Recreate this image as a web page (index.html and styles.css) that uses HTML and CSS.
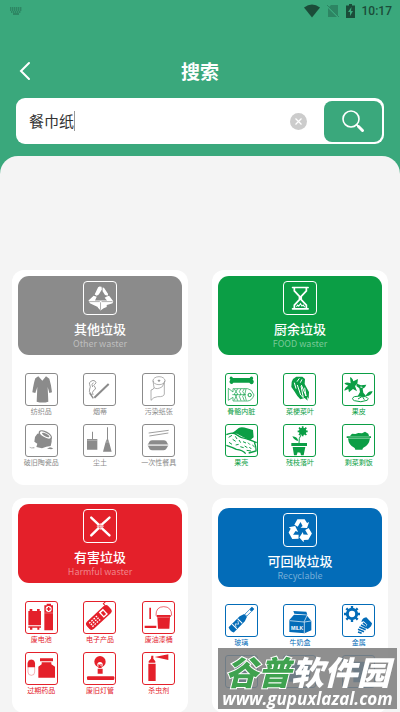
FILE: index.html
```html
<!DOCTYPE html>
<html lang="zh-CN">
	<head>
		<meta charset="UTF-8" />
		<meta name="viewport" content="width=device-width, initial-scale=1.0" />
		<title>搜索</title>
		<link rel="stylesheet" href="styles.css">
	</head>
	<body>
		<header class="header">
			<div class="status-bar">
				<svg class="keyboard" viewBox="0 0 12 8"><path d="M0 1h12M0 3h12M1 5h10" stroke-dasharray="1.4 .6"/><path d="M3 7h6"/></svg>
				<div class="status-right">
					<svg width="16" height="14" viewBox="0 0 16 14"><path d="M0 3.500Q8-2.500 16 3.500L8 13.500Z" fill="#1b4c39"/></svg>
					<svg width="12" height="14" viewBox="0 0 12 14"><path d="M4 1h7v11L2 3zM1 4l9 9H1z" fill="#2d8563"/><path d="M0 1l12 12" stroke="#2d8563"/></svg>
					<svg width="9" height="14" viewBox="0 0 9 14"><path d="M3 0h3v1.500h3V14H0V1.500h3z" fill="#1b4c39"/><path d="M5.500 3L2 8h2v4l3-5H5z" fill="#3aa87c"/></svg>
					<span class="time">10:17</span>
				</div>
			</div>
			<div class="nav">
				<button class="back" type="button" aria-label="返回">
					<svg width="12" height="20" viewBox="0 0 12 20"><path d="M10 2L2 10l8 8" fill="none" stroke="#fff" stroke-width="2" stroke-linecap="round"/></svg>
				</button>
				<h1 class="title">搜索</h1>
			</div>
			<form class="search">
				<input class="search-input" type="text" value="餐巾纸" aria-label="搜索垃圾">
				<span class="caret"></span>
				<button class="clear" type="button" aria-label="清除">
					<svg width="17" height="17" viewBox="0 0 17 17"><circle cx="8.500" cy="8.500" r="8.500" fill="#ccc"/><path d="M5.500 5.500l6 6m0-6l-6 6" stroke="#fff" stroke-width="1.300"/></svg>
				</button>
				<button class="search-button" type="button" aria-label="搜索">
					<svg width="24" height="24" viewBox="0 0 24 24" fill="none" stroke="#fff" stroke-linecap="round"><circle cx="10" cy="10" r="8" stroke-width="1.600"/><path d="M15.500 15.500l1.500 1.500" stroke-width="1.600"/><path d="M17.500 17.500l4 4" stroke-width="3"/></svg>
				</button>
			</form>
		</header>

		<main class="panel">
			<div class="cards">
				<section class="card other">
					<div class="banner">
						<svg class="badge" viewBox="3 3 93 93" fill="currentColor">
							<path d="M34 39L44 18 48 16 54 17 55 25 46 39 40 43zM57 19L61 20 73 38 72 43 64 41 57 30z"/>
							<path d="M31 43L40 46 35 57 49 57 49 62 43 76 20 65 16 57zM69 45L76 43 88 59 86 65 77 68 69 70 69 76 60 79 51 86 43 77 43 67 49 62V57H70L63 49z"/>
							<path d="M18 60H49M54 60H86M51 62V84" stroke="#8b8b8b" stroke-width="2"/>
						</svg>
						<h2 class="card-title">其他垃圾</h2>
						<p class="card-subtitle">Other waster</p>
					</div>
					<ul class="items">
						<li class="item">
							<svg class="icon" viewBox="3 3 93 93" fill="currentColor"><path d="M40 10L52 23 63 10 73 17Q79 36 81 58L73 60Q70 48 68 42L70 86Q53 91 35 86L37 42Q34 51 31 60L22 58Q26 30 31 16z"/></svg>
							<span class="caption">纺织品</span>
						</li>
						<li class="item">
							<svg class="icon" viewBox="3 3 93 93" fill="none" stroke="currentColor"><path d="M34 74L77 33" stroke-width="6"/><path d="M20 60L31 76" stroke-width="4"/><path d="M27 66Q15 56 20 48 24 42 20 35 16 29 24 25 30 20 36 24 43 30 35 34 29 37 36 42 41 49 32 52 26 57 30 66M31 29Q24 34 29 42" stroke-width="2.500"/></svg>
							<span class="caption">烟蒂</span>
						</li>
						<li class="item">
							<svg class="icon" viewBox="3 3 93 93" fill="none" stroke="currentColor" stroke-width="2"><ellipse cx="51" cy="23" rx="18" ry="12"/><ellipse cx="51" cy="23" rx="3" ry="2" fill="currentColor"/><path d="M33 23L36 44Q45 51 61 41L69 23M36 44Q35 50 27 51V82Q34 72 47 71 66 72 67 63V29"/></svg>
							<span class="caption">污染纸张</span>
						</li>
						<li class="item">
							<svg class="icon" viewBox="3 3 93 93" fill="currentColor"><path d="M30 39L28 53 37 59 34 69 51 73 64 68 77 66 80 53 80 40 68 33 47 27 37 29z"/><ellipse cx="61" cy="33" rx="20" ry="9" transform="rotate(28 61 33)" fill="#fff" stroke="currentColor" stroke-width="4"/><ellipse cx="62" cy="33" rx="12" ry="4" transform="rotate(28 62 33)"/><path d="M12 68l8 3 8-1v3H18zM66 74l9-4 10 3-6 3z"/></svg>
							<span class="caption">破旧陶瓷品</span>
						</li>
						<li class="item">
							<svg class="icon" viewBox="3 3 93 93" fill="currentColor"><path d="M27 23h3v22h13v32H12V45h15zM72 10h3v35l3 8 8 30H60l8-30 4-8z"/><path d="M13 49h29M67 54h13" stroke="#fff"/></svg>
							<span class="caption">尘土</span>
						</li>
						<li class="item">
							<svg class="icon" viewBox="3 3 93 93" fill="currentColor"><path d="M20 27l60-8M22 36l57-9" stroke="currentColor" stroke-width="2.500"/><path d="M18 61l5-9q3-3 8-3h34q5 0 8 3l5 9zM18 66h60l-6 10q-3 3-8 3H31q-5 0-8-3z"/><path d="M17 63h62" stroke="currentColor" stroke-width="2"/></svg>
							<span class="caption">一次性餐具</span>
						</li>
					</ul>
				</section>

				<section class="card food">
					<div class="banner">
						<svg class="badge" viewBox="3 3 93 93" fill="none" stroke="currentColor" stroke-width="5"><path d="M28 19H73M28 81H73" stroke-linecap="round"/><path d="M33 20V29L48 45V54L33 70V80M68 20V29L53 45V54L68 70V80"/><path d="M39 75L43 70 46 73 51 66 55 73 59 70 63 76" stroke-width="3"/></svg>
						<h2 class="card-title">厨余垃圾</h2>
						<p class="card-subtitle">FOOD waster</p>
					</div>
					<ul class="items">
						<li class="item">
							<svg class="icon" viewBox="3 3 93 93" fill="currentColor"><path d="M24 15H74Q76 9 82 11 87 14 83 20 89 23 84 32 77 36 73 29H25Q21 36 15 31 11 26 16 20 11 15 16 11 21 9 24 15z"/><g fill="none" stroke="currentColor"><path d="M10 46L24 57V47H68Q80 48 87 66 81 83 68 84H24V73L10 82z" stroke-width="2"/><path d="M28 48l5 8-5 7 5 7-5 12M38 47l-5 9 5 7-5 7 5 13M48 47l-5 9 5 7-5 7 5 13M58 47l-5 9 5 7-5 7 5 13M22 65H63M63 47Q55 66 64 83" stroke-width="2"/><circle cx="74" cy="66" r="5" stroke-width="3"/></g></svg>
							<span class="caption">骨骼内脏</span>
						</li>
						<li class="item">
							<svg class="icon" viewBox="3 3 93 93" fill="currentColor"><path d="M30 18L40 11 58 11 66 18 65 33 78 57 77 77 72 71 74 83 65 75 52 79 43 69 34 55 25 42 26 27z"/><path d="M43 36l10 30 8 8-7-35M55 36l14 33-4-25M34 29l5 18M49 16l-7 10M57 19l-5 10" fill="none" stroke="#fff" stroke-width="3"/></svg>
							<span class="caption">菜梗菜叶</span>
						</li>
						<li class="item">
							<svg class="icon" viewBox="3 3 93 93" fill="currentColor"><path d="M24 13Q31 14 34 25L48 18 46 32 39 39 45 55 33 48 21 58 19 48 7 53Q8 44 19 38L7 32Q13 26 26 31z"/><path d="M45 32l12 5 16-2-4 8-7 4 2 12 9 11H47l7-13-2-11-9-7zM72 66q8-14 20-11-5 15-20 14z"/><path d="M37 71q-11 6 0 12 20 7 38-1 9-6-5-11-16-4-33 0M48 78l13-8 6 10" fill="none" stroke="currentColor" stroke-width="3"/><path d="M55 42l6 1" stroke="#fff" stroke-width="3"/></svg>
							<span class="caption">果皮</span>
						</li>
						<li class="item">
							<svg class="icon" viewBox="3 3 93 93" fill="currentColor"><path d="M17 30Q30 22 41 12 50 7 66 13L84 18 86 40 75 49 54 39 36 29z"/><path d="M4 32Q23 22 36 33 46 42 63 44 82 50 95 56M4 64Q23 70 34 76 53 78 62 89M88 55Q94 70 93 81L71 87" fill="none" stroke="currentColor" stroke-width="4"/><path d="M11 40l10-6M12 55l9 6M23 46l9 6M31 37l5 8M32 63l9-2M42 48l5 8M46 68l10 3M54 53l9 4M59 66l8 5M69 56l6 6M73 69l6 6M82 63l7 6M65 79l13 2" stroke="currentColor" stroke-width="3"/></svg>
							<span class="caption">果壳</span>
						</li>
						<li class="item">
							<svg class="icon" viewBox="3 3 93 93" fill="currentColor"><circle cx="59" cy="22" r="11"/><path d="M59 7v30M44 22h30M48 11l22 22M70 11L48 33" stroke="currentColor" stroke-width="5"/><path d="M54 33Q47 41 48 58" fill="none" stroke="currentColor" stroke-width="3"/><path d="M28 37Q43 38 46 51 34 50 28 37M25 57h47v9H25zM29 69h38l-5 25h-8l-2-8-8-1-3 9h-8z"/></svg>
							<span class="caption">残枝落叶</span>
						</li>
						<li class="item">
							<svg class="icon" viewBox="3 3 93 93" fill="currentColor"><path d="M24 36l6-7 10 1 9-3 11 1 9-5 10 6 2 7zM14 37h73v5H14zM18 43h66q-3 22-21 29l-2 5H40l-2-5Q20 65 18 43z"/><path d="M19 42H83" stroke="#fff"/></svg>
							<span class="caption">剩菜剩饭</span>
						</li>
					</ul>
				</section>

				<section class="card harmful">
					<div class="banner">
						<svg class="badge" viewBox="3 3 93 93" stroke="currentColor" stroke-width="7" stroke-linecap="round"><path d="M24 25L44 44M77 25L56 44M24 77L44 57M77 77L56 57"/><path d="M45 45H55V56H45zM50 42V60M41 50H60" fill="none" stroke-width="2"/></svg>
						<h2 class="card-title">有害垃圾</h2>
						<p class="card-subtitle">Harmful waster</p>
					</div>
					<ul class="items">
						<li class="item">
							<svg class="icon" viewBox="3 3 93 93" fill="currentColor"><path d="M10 30h38v43H10zM14 24h8v6h-8zM36 24h8v6h-8zM10 76h38v4h-5v6h-6v-6H22v6h-7v-6h-5zM58 13h7V8h13v5h6v75H58z"/><circle cx="71" cy="24" r="9" fill="#fff"/><path d="M65 24h12M71 18v12" stroke="currentColor" stroke-width="4"/><path d="M58 36h26" stroke="#fff"/></svg>
							<span class="caption">废电池</span>
						</li>
						<li class="item">
							<svg class="icon" viewBox="3 3 93 93"><g transform="rotate(-43 49 48)"><rect x="3" y="33" width="88" height="30" rx="10" fill="currentColor"/><path d="M85 34v-7h12" fill="none" stroke="currentColor" stroke-width="3"/><path d="M57 37h17v22H57z" fill="#fff"/><path d="M61 42h9v13h-9z" fill="currentColor"/><path d="M14 41h36M14 48h36M14 55h36" stroke="#fff" stroke-width="4" stroke-dasharray="5 4"/></g></svg>
							<span class="caption">电子产品</span>
						</li>
						<li class="item">
							<svg class="icon" viewBox="3 3 93 93" fill="currentColor"><path d="M22 20h5v34h-5zM8 74h35v7H8zM44 42h42v6h-2l-2 35H48l-2-35h-2z"/><path d="M42 44Q41 17 65 17 89 17 89 44" fill="none" stroke="currentColor" stroke-width="2"/><path d="M47 49h36" stroke="#fff"/></svg>
							<span class="caption">废油漆桶</span>
						</li>
						<li class="item">
							<svg class="icon" viewBox="3 3 93 93" fill="currentColor"><rect x="9" y="23" width="20" height="47" rx="10" fill="#fff" stroke="currentColor"/><path d="M8 46V33Q10 23 19 23 28 23 30 33V46zM45 19h39v9H45zM50 31h29v6l11 7v33H40V44l10-7z"/></svg>
							<span class="caption">过期药品</span>
						</li>
						<li class="item">
							<svg class="icon" viewBox="3 3 93 93" fill="currentColor"><circle cx="51" cy="29" r="17"/><circle cx="51" cy="38" r="8" fill="#fff"/><path d="M46 37h10v11H46zM44 50h15v15H44z"/><path d="M47 34l8 8" stroke="#fff" stroke-width="2"/><rect x="12" y="73" width="82" height="11" rx="3"/></svg>
							<span class="caption">废旧灯管</span>
						</li>
						<li class="item">
							<svg class="icon" viewBox="3 3 93 93" fill="currentColor"><path d="M28 11h6v9l6 8v4H20v-4l7-8zM19 35h22v52H19zM38 15l41-8v17z"/></svg>
							<span class="caption">杀虫剂</span>
						</li>
					</ul>
				</section>

				<section class="card recyclable">
					<div class="banner">
						<svg class="badge" viewBox="3 3 93 93" fill="currentColor">
							<path id="arrow" d="M33 34L42 18H63L70 29 76 26 70 44 51 43 57 38 51 26 43 40z"/>
							<use href="#arrow" transform="rotate(120 51 51)"/>
							<use href="#arrow" transform="rotate(240 51 51)"/>
						</svg>
						<h2 class="card-title">可回收垃圾</h2>
						<p class="card-subtitle">Recyclable</p>
					</div>
					<ul class="items">
						<li class="item">
							<svg class="icon" viewBox="3 3 93 93" fill="currentColor"><g transform="rotate(45 49 47)"><path d="M44-3h10v10H44zM43 29h12l5 14v47q-11 6-22 0V43z"/><path d="M45 8h8v20h-8z" fill="#fff" stroke="currentColor" stroke-width="2"/><path d="M39 53h20M39 76h20" stroke="#fff" stroke-width="3"/><path d="M44 57l9 5-8 7 9 5" fill="none" stroke="#fff" stroke-width="2"/></g></svg>
							<span class="caption">玻璃</span>
						</li>
						<li class="item">
							<svg class="icon" viewBox="3 3 93 93" fill="currentColor"><path d="M31 21l39 2 3 9-39-3zM33 32l38 2 14 17v28l-20 9-46-4V48z"/><path d="M20 50l43 4 9-19M64 54v33M64 54l20-3" fill="none" stroke="#fff" stroke-width="2"/><text class="carton-label" x="24" y="78">MILK</text></svg>
							<span class="caption">牛奶盒</span>
						</li>
						<li class="item">
							<svg class="icon" viewBox="3 3 93 93" fill="currentColor"><circle cx="30" cy="30" r="14" fill="none" stroke="currentColor" stroke-width="9"/><path d="M30 6v11M30 43v11M6 30h11M43 30h11M13 13l8 8M39 39l8 8M47 13l-8 8M13 47l8-8" stroke="currentColor" stroke-width="7"/><path d="M58 54Q61 41 73 40L90 58Q89 69 77 75L70 71 76 62 65 52z"/><path d="M63 57l10 8M57 63l16 8M52 69l19 8M48 76l18 7M48 84l11 4" stroke="currentColor" stroke-width="5"/></svg>
							<span class="caption">金属</span>
						</li>
						<li class="item">
							<svg class="icon" viewBox="3 3 93 93" fill="currentColor"><path d="M42 10h15v12l12 16v47H30V38l12-16z"/></svg>
						</li>
						<li class="item">
							<svg class="icon" viewBox="3 3 93 93" fill="currentColor"><path d="M18 36l18-13h46v43L64 80H18z"/></svg>
						</li>
						<li class="item">
							<svg class="icon" viewBox="3 3 93 93" fill="currentColor"><path d="M17 31l20-11h28l20 11-8 20-10-5v36H34V46l-10 5z"/></svg>
						</li>
					</ul>
				</section>
			</div>
		</main>

		<aside class="watermark">
			<p class="watermark-name"><span class="watermark-green">谷普</span>软件园</p>
			<p class="watermark-url">www.gupuxlazal.com</p>
		</aside>
	</body>
</html>
```
FILE: styles.css
```css
* { margin: 0; padding: 0; box-sizing: border-box; }
body {
	min-height: 100vh;
	font-family: "Noto Sans CJK SC", "Noto Sans", sans-serif;
	background: #3aa87c;
}
svg {
	display: block;
}
button {
	display: flex;
	align-items: center;
	justify-content: center;
	border: none;
	background: none;
	cursor: pointer;
}
.header {
	padding-bottom: 12px;
}
.status-bar {
	display: flex;
	align-items: center;
	justify-content: space-between;
	height: 22px;
	padding: 0 8px 0 10px;
}
.keyboard {
	width: 12px;
	height: 8px;
	fill: none;
	stroke: #23664c;
}
.status-right {
	display: flex;
	align-items: center;
	gap: 7px;
}
.time {
	font: 500 12px/16px Roboto, sans-serif;
	color: #1b4c39;
}
.nav {
	display: grid;
	grid-template-columns: 36px 1fr 36px;
	align-items: center;
	padding: 33px 7px 11px;
}
.back {
	height: 32px;
}
.title {
	font-size: 19px;
	line-height: 32px;
	font-weight: 700;
	text-align: center;
	color: #fff;
}
.search {
	position: relative;
	display: flex;
	align-items: center;
	height: 46px;
	margin: 0 16px;
	padding: 2px;
	border-radius: 9px;
	background: #fff;
}
.search-input {
	flex: 1;
	min-width: 0;
	height: 100%;
	padding: 0 0 2px 11px;
	border: none;
	outline: none;
	background: none;
	font-family: inherit;
	font-size: 15px;
	color: #333;
}
/* text cursor after the typed word */
.caret {
	position: absolute;
	left: 58px;
	top: 13px;
	width: 1px;
	height: 20px;
	background: #999;
}
.clear {
	margin-right: 17px;
}
.search-button {
	width: 58px;
	height: 41px;
	border-radius: 8px;
	background: #3aa87c;
}
.panel {
	padding: 114px 12px 0;
	border-radius: 18px 18px 0 0;
	background: #f4f4f4;
}
.cards {
	display: grid;
	grid-template-columns: 1fr 1fr;
	gap: 13px 24px;
}
.card {
	padding: 6px 0 17px;
	border-radius: 12px;
	background: #fff;
}
.other { color: #8b8b8b; }
.food { color: #0b9e45; }
.harmful { color: #e4202a; }
.recyclable {
	padding-top: 10px;
	color: #036cb8;
}
.banner {
	display: flex;
	flex-direction: column;
	align-items: center;
	margin: 0 6px;
	padding: 5px 0 6px;
	border-radius: 11px;
	background: currentColor;
}
.badge {
	width: 34px;
	height: 34px;
	border: 1px solid #fff;
	border-radius: 4px;
	color: #fff;
}
.card-title {
	margin-top: 5px;
	font-size: 13px;
	line-height: 18px;
	font-weight: 500;
	color: #fff;
}
.card-subtitle {
	font-size: 9px;
	line-height: 11px;
	color: rgba(255, 255, 255, 0.45);
}
.items {
	display: grid;
	grid-template-columns: repeat(3, 1fr);
	row-gap: 7px;
	margin-top: 18px;
	list-style: none;
}
.recyclable .items {
	margin-top: 17px;
}
.item {
	display: flex;
	flex-direction: column;
	align-items: center;
}
.icon {
	width: 33px;
	height: 33px;
	border: 1px solid currentColor;
	border-radius: 3px;
}
.carton-label {
	font: 700 15px "Liberation Sans", sans-serif;
	fill: #fff;
}
.caption {
	font-size: 7px;
	line-height: 11px;
}
.watermark {
	position: fixed;
	right: 3px;
	bottom: 3px;
	width: 179px;
	padding-top: 5px;
	background: rgba(128, 128, 128, 0.88);
	color: #fff;
	text-align: center;
	white-space: nowrap;
}
.watermark-name {
	font-size: 33px;
	line-height: 36px;
	font-weight: 900;
	font-style: italic;
}
.watermark-green {
	color: #3fa24f;
	-webkit-text-stroke: 2px #fff;
	paint-order: stroke fill;
}
.watermark-url {
	font: italic 700 17px/20px "Open Sans", sans-serif;
}
```
